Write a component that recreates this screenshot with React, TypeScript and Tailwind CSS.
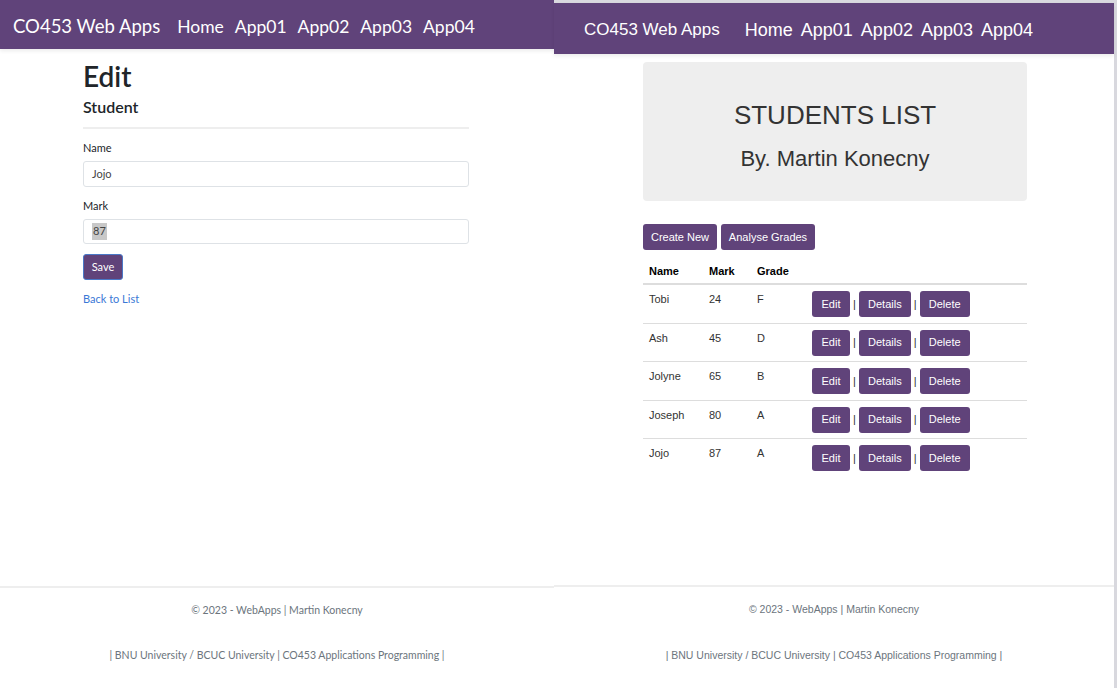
import React from "react";

const purple = "bg-[#60437a]";

function LeftPanel() {
  return (
    <div className="w-[554px] h-[688px] flex flex-col bg-white" style={{ fontFamily: 'Lato, "Noto Sans", sans-serif' }}>
      <nav className={`${purple} h-[49px] flex items-center pl-[13px] pt-[5px] gap-[11px] text-white shadow-[0_2px_4px_rgba(0,0,0,0.08)]`}>
        <span className="text-[18.5px] mr-[6px]">CO453 Web Apps</span>
        <span className="text-[17.5px]">Home</span>
        <span className="text-[17.5px]">App01</span>
        <span className="text-[17.5px]">App02</span>
        <span className="text-[17.5px]">App03</span>
        <span className="text-[17.5px]">App04</span>
      </nav>
      <div className="pl-[83px] w-[469px] pt-[11px] text-[#212529]">
        <h1 className="text-[28px] font-semibold leading-[32px]">Edit</h1>
        <h4 className="text-[16px] font-semibold leading-[20px] mt-[5px]">Student</h4>
        <div className="h-[2px] bg-[#eeeeee] mt-[10px] w-[386px]" />
        <div className="w-[386px]">
          <div className="text-[11px] mt-[11px] leading-[16px]">Name</div>
          <div className="mt-[5px] h-[26px] border border-[#dee2e6] rounded-[3px] flex items-center pl-[8px] text-[11px] text-[#444]">Jojo</div>
          <div className="text-[11px] mt-[11px] leading-[16px]">Mark</div>
          <div className="mt-[5px] h-[25px] border border-[#dee2e6] rounded-[3px] flex items-center pl-[8px] text-[11px] text-[#444]">
            <span className="bg-[#c8c8c8] px-[1px]">87</span>
          </div>
          <button className={`${purple} mt-[10px] h-[26px] w-[40px] rounded-[3px] text-white text-[11px] border border-[#4a79c7]`}>Save</button>
          <div className="mt-[11px] text-[11px] text-[#3a78d6]">Back to List</div>
        </div>
      </div>
      <div className="flex-1" />
      <footer className="h-[102px] border-t-[2px] border-[#eeeeee] flex flex-col items-center text-[10.5px] text-[#6c757d]">
        <div className="mt-[15px]">© 2023 - WebApps | Martin Konecny</div>
        <div className="mt-[29px]">| BNU University / BCUC University | CO453 Applications Programming |</div>
      </footer>
    </div>
  );
}

function SmallBtn({ children, w }: { children: React.ReactNode; w: string }) {
  return (
    <span className={`${purple} ${w} h-[26px] inline-flex items-center justify-center rounded-[3px] text-white text-[11px]`}>{children}</span>
  );
}

const rows = [
  ["Tobi", "24", "F"],
  ["Ash", "45", "D"],
  ["Jolyne", "65", "B"],
  ["Joseph", "80", "A"],
  ["Jojo", "87", "A"],
];

function RightPanel() {
  return (
    <div className="flex-1 h-[688px] flex flex-col bg-white border-r-[3px] border-[#d8d8de]" style={{ fontFamily: '"Liberation Sans", Arial, sans-serif' }}>
      <div className="h-[3px] bg-[#d9d9df]" />
      <nav className={`${purple} h-[51px] flex items-center pl-[30px] pt-[3px] gap-[8px] text-white shadow-[0_2px_4px_rgba(0,0,0,0.08)]`}>
        <span className="text-[17px] mr-[17px]">CO453 Web Apps</span>
        <span className="text-[18px]">Home</span>
        <span className="text-[18px]">App01</span>
        <span className="text-[18px]">App02</span>
        <span className="text-[18px]">App03</span>
        <span className="text-[18px]">App04</span>
      </nav>
      <div className="pl-[89px] pt-[8px]">
        <div className="w-[384px]">
          <div className="h-[139px] bg-[#eeeeee] rounded-[4px] flex flex-col items-center text-[#333]">
            <div className="text-[26px] mt-[37px] leading-[32px]">STUDENTS LIST</div>
            <div className="text-[22px] mt-[15px] leading-[26px]">By. Martin Konecny</div>
          </div>
          <div className="flex gap-[4px] mt-[23px]">
            <SmallBtn w="w-[74px]">Create New</SmallBtn>
            <SmallBtn w="w-[94px]">Analyse Grades</SmallBtn>
          </div>
          <div className="mt-[8px] text-[11px] text-[#333]">
            <div className="flex h-[27px] items-center border-b-[2px] border-[#dddddd] font-bold text-black">
              <div className="w-[66px] pl-[6px] pt-[2px]">Name</div>
              <div className="w-[48px] pt-[2px]">Mark</div>
              <div className="w-[55px] pt-[2px]">Grade</div>
            </div>
            {rows.map((r, i) => (
              <div key={i} className={`flex h-[38.5px] items-start ${i < rows.length - 1 ? "border-b border-[#dddddd]" : ""}`}>
                <div className="w-[66px] pl-[6px] pt-[6px]">{r[0]}</div>
                <div className="w-[48px] pt-[6px]">{r[1]}</div>
                <div className="w-[55px] pt-[6px]">{r[2]}</div>
                <div className="flex items-center pt-[6px] gap-[3px]">
                  <SmallBtn w="w-[38px]">Edit</SmallBtn>
                  <span className="text-[11px]">|</span>
                  <SmallBtn w="w-[52px]">Details</SmallBtn>
                  <span className="text-[11px]">|</span>
                  <SmallBtn w="w-[50px]">Delete</SmallBtn>
                </div>
              </div>
            ))}
          </div>
        </div>
      </div>
      <div className="flex-1" />
      <footer className="h-[103px] border-t-[2px] border-[#eeeeee] flex flex-col items-center text-[10.5px] text-[#6c757d]">
        <div className="mt-[15px]">© 2023 - WebApps | Martin Konecny</div>
        <div className="mt-[30px]">| BNU University / BCUC University | CO453 Applications Programming |</div>
      </footer>
    </div>
  );
}

export default function App() {
  return (
    <div className="w-[1117px] h-[688px] flex overflow-hidden bg-white">
      <LeftPanel />
      <RightPanel />
    </div>
  );
}
